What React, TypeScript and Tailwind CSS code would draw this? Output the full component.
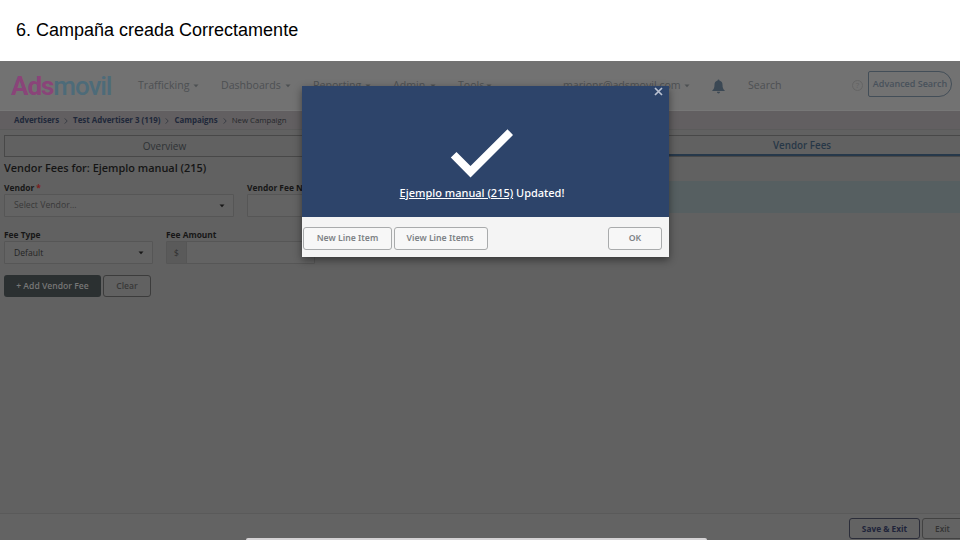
import React from "react";

const Caret = ({ className = "" }: { className?: string }) => (
  <svg width="6" height="4" viewBox="0 0 6 4" className={"shrink-0 " + className}>
    <path d="M0.5 0.6h5L3 3.300z" fill="currentColor" />
  </svg>
);

const NavItem = ({ label, className }: { label: string; className: string }) => (
  <div className={"flex shrink-0 items-center justify-between whitespace-nowrap " + className}>
    <span>{label}</span>
    <Caret className="mt-0.5" />
  </div>
);

const Chevron = () => (
  <svg width="4" height="6" viewBox="0 0 4 6" className="shrink-0">
    <path d="M0.7 0.4L3.2 3L0.7 5.6" fill="none" stroke="#363a42" strokeWidth="0.9" />
  </svg>
);

function Header() {
  return (
    <header className="flex h-[50px] items-center border-b border-[#777] bg-[#727272] text-[10.6px] text-[#4d5052]">
      <div className="ml-[11px] mt-px flex w-[101px] shrink-0 items-baseline font-['Roboto'] text-[26px] leading-none tracking-[-1.05px]">
        <span className="font-bold text-[#8a4479]">Ads</span>
        <span className="font-medium text-[#4d6b79]">movil</span>
      </div>
      <NavItem label="Trafficking" className="ml-[26px] w-[61px]" />
      <NavItem label="Dashboards" className="ml-[22px] w-[70px]" />
      <NavItem label="Reporting" className="ml-[22px] w-[58px]" />
      <NavItem label="Admin" className="ml-[22px] w-[43px]" />
      <NavItem label="Tools" className="ml-[22px] w-[34px]" />
      <NavItem label="marionr@adsmovil.com" className="ml-[71px] w-[127px]" />
      <svg width="13" height="15" viewBox="0 0 13 15" className="ml-[22px] mt-px shrink-0" fill="#3b4854">
        <path d="M6.5 0.4c.6 0 .9.4.9 1C9.6 2 10.500 3.600 10.500 5.800c0 3 .7 4.500 2.200 5.600v.7H.3v-.7C1.800 10.300 2.500 8.800 2.500 5.800c0-2.200.9-3.800 3.100-4.400 0-.6.3-1 .9-1z" />
        <path d="M5 12.800h3c0 .9-.6 1.600-1.500 1.600S5 13.700 5 12.800z" />
      </svg>
      <span className="ml-[23px] w-[104px] shrink-0">Search</span>
      <div className="mb-px flex size-[11px] shrink-0 items-center justify-center rounded-full border border-[#656565] text-[8px] text-[#626262]">?</div>
      <button className="mb-[3px] ml-[5px] flex h-[26px] w-[84px] shrink-0 items-center justify-center whitespace-nowrap rounded-l-[2px] rounded-r-[13px] border border-[#434e58] text-[9px] font-semibold text-[#48515b]">
        Advanced Search
      </button>
    </header>
  );
}

function Breadcrumb() {
  return (
    <nav className="flex h-[19px] items-center gap-[5px] whitespace-nowrap border-b border-[#5b5b5b] bg-[#625f61] pl-[14px] pt-px text-[7.9px] font-bold text-[#20283a]">
      <span>Advertisers</span>
      <Chevron />
      <span>Test Advertiser 3 (119)</span>
      <Chevron />
      <span>Campaigns</span>
      <Chevron />
      <span className="text-[7.8px] font-normal text-[#25272b]">New Campaign</span>
    </nav>
  );
}

function Tabs() {
  return (
    <div className="ml-1 mt-[5px] flex h-[22px] w-[960px] shrink-0 border border-[#484848] text-[10px] text-[#2e3235]">
      <div className="flex w-[320px] items-center justify-center border-r border-[#484848]">Overview</div>
      <div className="flex w-[319px] items-center justify-center border-r border-[#484848]">Line Items</div>
      <div className="flex flex-1 items-center justify-center border-b-2 border-[#26384a] pr-[3px] pt-[3px] text-[9.8px] font-semibold text-[#273747]">Vendor Fees</div>
    </div>
  );
}

function VendorForm() {
  return (
    <main className="flex flex-1 flex-col text-[8.4px] text-[#292929]">
      <h1 className="mt-[2px] h-[17px] pl-1 text-[10.92px] font-semibold leading-[18px] text-[#151515]">Vendor Fees for: Ejemplo manual (215)</h1>
      <div className="mt-[5px] flex h-8">
        <div className="ml-1 w-[230px] shrink-0">
          <label className="block h-[13px] font-bold leading-[13px] text-[#171717]">
            Vendor <span className="text-[#7a1e1e]">*</span>
          </label>
          <div className="flex h-[23px] items-center justify-between rounded-[1px] border border-[#565656] bg-[#636363] pl-[9px] pr-[8px] pt-px text-[8.7px] text-[#393939]">
            <span>Select Vendor...</span>
            <Caret className="text-[#171717]" />
          </div>
        </div>
        <div className="ml-[13px] w-[230px] shrink-0">
          <label className="block h-[13px] font-bold leading-[13px] text-[#171717]">Vendor Fee Name</label>
          <div className="h-[23px] rounded-[1px] border border-[#565656] bg-[#636363]" />
        </div>
        <div className="ml-[13px] flex-1 bg-[#565f61]" />
      </div>
      <div className="mt-[15px] flex h-9">
        <div className="ml-1 w-[149px] shrink-0">
          <label className="block h-[13px] font-bold leading-[13px] text-[#171717]">Fee Type</label>
          <div className="flex h-[23px] items-center justify-between rounded-[1px] border border-[#565656] bg-[#636363] pl-[9px] pr-[8px] pt-px text-[8.6px] text-[#232323]">
            <span>Default</span>
            <Caret className="text-[#171717]" />
          </div>
        </div>
        <div className="ml-[13px] w-[149px] shrink-0">
          <label className="block h-[13px] font-bold leading-[13px] text-[#171717]">Fee Amount</label>
          <div className="flex h-[23px] rounded-[1px] border border-[#565656] bg-[#636363]">
            <span className="flex w-5 items-center justify-center border-r border-[#565656] bg-[#5a5a5a] pt-px text-[#303030]">$</span>
          </div>
        </div>
      </div>
      <div className="mt-[11px] flex gap-[2px] pl-1 font-semibold">
        <button className="h-[22px] w-[97px] rounded-[3px] bg-[#2b3031] pt-px text-[8.6px] text-[#777]">+ Add Vendor Fee</button>
        <button className="h-[22px] w-12 rounded-[3px] border border-[#3c3c3c] pt-px text-[8.6px] text-[#383838]">Clear</button>
      </div>
    </main>
  );
}

function SuccessDialog() {
  const button = "flex h-[23px] items-center justify-center rounded-[3px] border border-[#a9abac] bg-[#f7f7f7] pt-[2px] text-[8.7px] font-semibold text-[#7d8285] ";
  return (
    <div className="absolute left-[302px] top-[86px] flex h-[171px] w-[367px] flex-col bg-[#f4f4f4] shadow-[0_3px_8px_rgba(0,0,0,0.45)]">
      <div className="flex h-[131px] flex-col items-center bg-[#2d446a] text-white">
        <svg width="9" height="9" viewBox="0 0 9 9" className="mr-[6px] mt-[1px] self-end">
          <path d="M1 1L8 8M8 1L1 8" stroke="#bac2d2" strokeWidth="1.700" />
        </svg>
        <svg width="64" height="49" viewBox="0 0 64 49" className="mr-[7px] mt-[33px]">
          <path d="M0.800 28.500L6.500 23L20.500 37L57.500 0.300L63 6L20.500 48.500Z" fill="white" />
        </svg>
        <p className="mr-[7px] mt-[7px] whitespace-nowrap text-[11px] font-medium leading-4">
          <span className="underline decoration-1 underline-offset-1">Ejemplo manual (215)</span> Updated!
        </p>
      </div>
      <div className="flex flex-1 items-center gap-[2px] pb-[1px] pl-[1px] pr-[7px] pt-[3px]">
        <button className={button + "w-[89px]"}>New Line Item</button>
        <button className={button + "w-[94px] pr-[2px]"}>View Line Items</button>
        <button className={button + "ml-auto w-[54px]"}>OK</button>
      </div>
    </div>
  );
}

export default function App() {
  return (
    <div className="flex h-[540px] w-[960px] flex-col overflow-hidden bg-white">
      <div className="flex h-[61px] shrink-0 items-center pl-4 font-['Liberation_Sans'] text-[18px] text-black">6. Campaña creada Correctamente</div>
      <div className="flex h-[479px] shrink-0 flex-col bg-[#616161] font-['Open_Sans']">
        <Header />
        <Breadcrumb />
        <Tabs />
        <VendorForm />
        <footer className="flex h-[27px] shrink-0 gap-[2px] border-t border-[#5a5a5a] bg-[#636363] pl-[849px] pt-[4px] text-[8.3px]">
          <button className="h-[21px] w-[71px] shrink-0 rounded-[3px] border border-[#2b2d39] pt-px font-bold text-[#20243a]">Save &amp; Exit</button>
          <button className="h-[21px] w-[41px] shrink-0 rounded-[3px] border border-[#424242] pt-px font-semibold text-[#333]">Exit</button>
        </footer>
      </div>
      <SuccessDialog />
      <div className="absolute left-[246px] top-[538px] h-[2px] w-[461px] rounded-t-[2px] bg-[#d5d3d5]" />
    </div>
  );
}
